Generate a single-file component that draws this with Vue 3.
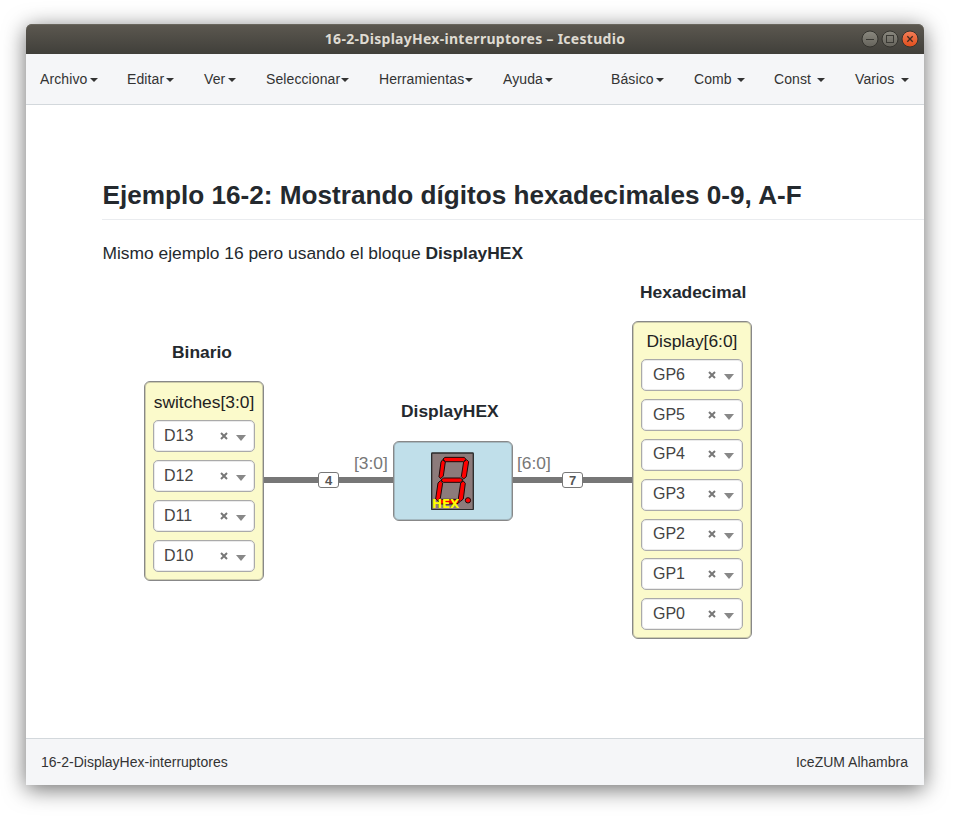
<script setup>
const menus = ['Archivo', 'Editar', 'Ver', 'Seleccionar', 'Herramientas', 'Ayuda', 'Básico', 'Comb', 'Const', 'Varios']
const widths = [58, 47, 32, 83, 94, 50, 53, 51, 51, 54]
const inputPins = ['D13', 'D12', 'D11', 'D10']
const outputPins = ['GP6', 'GP5', 'GP4', 'GP3', 'GP2', 'GP1', 'GP0']
</script>

<template>
  <div class="desktop">
    <div class="window">
      <header class="titlebar">
        <span class="title">16-2-DisplayHex-interruptores – Icestudio</span>
        <div class="controls">
          <svg class="control" viewBox="0 0 18 18">
            <defs>
              <linearGradient id="grayBtn" x1="0" y1="0" x2="0" y2="1">
                <stop offset="0" stop-color="#8a887f" /><stop offset="1" stop-color="#65635b" />
              </linearGradient>
            </defs>
            <circle cx="9" cy="9" r="8" fill="url(#grayBtn)" stroke="#34332e" />
            <path d="M5 9.5h8" stroke="#3a3934" />
          </svg>
          <svg class="control" viewBox="0 0 18 18">
            <circle cx="9" cy="9" r="8" fill="url(#grayBtn)" stroke="#34332e" />
            <rect x="5.5" y="5.5" width="7" height="7" fill="none" stroke="#3a3934" />
          </svg>
          <svg class="control" viewBox="0 0 18 18">
            <defs>
              <linearGradient id="closeBtn" x1="0" y1="0" x2="0" y2="1">
                <stop offset="0" stop-color="#f37e58" /><stop offset="1" stop-color="#e04e1c" />
              </linearGradient>
            </defs>
            <circle cx="9" cy="9" r="8" fill="url(#closeBtn)" stroke="#34332e" />
            <path d="M6.3 6.3l5.4 5.4M11.7 6.3l-5.4 5.4" stroke="#3f2a20" stroke-width="1.3" />
          </svg>
        </div>
      </header>

      <nav class="menubar">
        <div v-for="(m, i) in menus" :key="m" class="menu" :style="{ width: widths[i] + 'px' }">
          <span>{{ m }}</span><i class="caret"></i>
        </div>
      </nav>

      <main class="canvas">
        <section class="info">
          <h2>Ejemplo 16-2: Mostrando dígitos hexadecimales 0-9, A-F</h2>
          <p>Mismo ejemplo 16 pero usando el bloque <b>DisplayHEX</b></p>
        </section>

        <div class="wire wire-in"></div>
        <div class="wire wire-out"></div>
        <span class="size size-in">4</span>
        <span class="size size-out">7</span>
        <span class="port port-in">[3:0]</span>
        <span class="port port-out">[6:0]</span>

        <b class="label label-in">Binario</b>
        <div class="block block-in">
          <span class="name">switches[3:0]</span>
          <div v-for="p in inputPins" :key="p" class="select">
            <span class="pin">{{ p }}</span>
            <svg class="clear" viewBox="0 0 8 8"><path d="M1 1l6 6M7 1l-6 6" /></svg>
            <i class="arrow"></i>
          </div>
        </div>

        <b class="label label-hex">DisplayHEX</b>
        <div class="block-hex">
          <svg class="digit" viewBox="20 20 130 176">
            <rect x="22" y="23" width="125" height="170" rx="2" fill="#8c7b7b" stroke="#2b2b2b" stroke-width="4" />
            <g fill="#f00" stroke="#1c0808" stroke-width="3" stroke-linejoin="round">
              <path d="M56 41l6-5h58l5 6-7 7H63z" />
              <path d="M55 43l8 7-6 42-8 8-5-6 6-44z" />
              <path d="M127 43l6 6-7 45-8 7-7-7 7-44z" />
              <path d="M48 106l7 7-7 46-8 7-6-5 7-48z" />
              <path d="M117 107l6 7-6 47-8 7-7-7 7-48z" />
              <path d="M50 104l8-6h50l8 6-8 7H57z" />
              <path d="M42 169l9-7h46l9 8-8 6H49z" />
              <circle cx="131" cy="165" r="8" />
            </g>
            <text x="23" y="188" font-size="36" textLength="82" fill="#ff0">HEX</text>
          </svg>
        </div>

        <b class="label label-out">Hexadecimal</b>
        <div class="block block-out">
          <span class="name">Display[6:0]</span>
          <div v-for="p in outputPins" :key="p" class="select">
            <span class="pin">{{ p }}</span>
            <svg class="clear" viewBox="0 0 8 8"><path d="M1 1l6 6M7 1l-6 6" /></svg>
            <i class="arrow"></i>
          </div>
        </div>
      </main>

      <footer class="statusbar">
        <span>16-2-DisplayHex-interruptores</span>
        <span>IceZUM Alhambra</span>
      </footer>
    </div>
  </div>
</template>

<style>
body { background: #fff; overflow: hidden; }
</style>

<style scoped>
* { box-sizing: border-box; }
.desktop {
  height: 823px;
  padding: 24px 44px 38px 26px;
  font-family: "Liberation Sans", Arial, sans-serif;
  color: #24292e;
}
.window {
  height: 761px;
  display: flex;
  flex-direction: column;
  background: #fff;
  border-radius: 6px 6px 0 0;
  box-shadow: 0 4px 22px rgba(0, 0, 0, .58);
}
.titlebar {
  height: 30px;
  flex: none;
  display: grid;
  grid-template-columns: 1fr auto 1fr;
  align-items: center;
  padding-right: 5px;
  border-radius: 6px 6px 0 0;
  background: linear-gradient(#5c5850, #403f3a);
  box-shadow: inset 0 1px #69665d;
}
.title {
  grid-column: 2;
  padding-left: 5px;
  font: bold 14px/30px "Noto Sans", sans-serif;
  letter-spacing: .28px;
  color: #dfdbd2;
  white-space: nowrap;
}
.controls { display: flex; justify-content: flex-end; gap: 2px; }
.control { width: 18px; height: 18px; display: block; }
.menubar {
  height: 51px;
  flex: none;
  display: grid;
  grid-template-columns: 87px 77px 62px 113px 124px 108px 83px 80px 81px 54px;
  align-items: center;
  padding-left: 14px;
  background: #f5f6f8;
  border-bottom: 1px solid #d3d8dc;
  font-size: 14px;
  letter-spacing: .1px;
  color: #333;
}
.menu { display: flex; justify-content: space-between; align-items: center; }
.caret {
  margin-top: 2px;
  border: 4px solid transparent;
  border-top-color: #333;
  border-bottom: 0;
}
.canvas { flex: 1; position: relative; padding: 73px 0 0 76px; }
.info h2 {
  margin: 0;
  height: 42px;
  padding-left: .5px;
  font-size: 26.15px;
  line-height: 34px;
  border-bottom: 1px solid #eaecef;
  white-space: nowrap;
}
.info p { margin: 22px 0 0 .5px; font-size: 17.4px; line-height: 22px; }
.label, .port, .size, .wire, .block, .block-hex { position: absolute; }
.label { font-size: 17.4px; line-height: 20px; white-space: nowrap; }
.label-in { left: 146px; top: 237px; }
.label-hex { left: 375px; top: 296px; }
.label-out { left: 614px; top: 177px; }
.block {
  width: 120px;
  padding: 8px 8px 0;
  display: flex;
  flex-direction: column;
  gap: 8px;
  background: #fbfacb;
  border: 1px solid #888;
  border-radius: 6px;
  box-shadow: inset 0 0 0 1px rgba(100, 100, 100, .3);
}
.block-in { left: 118px; top: 276px; height: 200px; }
.block-out { left: 606px; top: 216px; height: 318px; padding-top: 7.4px; gap: 7.85px; }
.name { height: 22px; line-height: 24px; font-size: 17.4px; text-align: center; white-space: nowrap; color: #222; }
.select {
  width: 102px;
  height: 32px;
  flex: none;
  display: flex;
  align-items: center;
  padding: 0 8px 1px 10px;
  background: #fff;
  border: 1px solid #aaa;
  border-radius: 5px;
  box-shadow: inset 0 0 0 1px rgba(120, 120, 120, .15);
}
.block-out .select { padding-left: 11px; padding-right: 7px; }
.pin { width: 56px; font-size: 16px; color: #444; }
.clear { width: 8px; height: 8px; flex: none; }
.block-out .clear { margin-left: -1px; }
.clear path { stroke: #777; stroke-width: 2; fill: none; }
.arrow {
  margin: 4px 0 0 8px;
  border: 5px solid transparent;
  border-top: 6px solid #888;
  border-bottom: 0;
}
.block-hex {
  left: 367px;
  top: 336px;
  width: 120px;
  height: 80px;
  display: flex;
  align-items: center;
  justify-content: center;
  background: #c0dfea;
  border: 1px solid #888;
  border-radius: 6px;
  box-shadow: inset 0 0 0 1px rgba(100, 100, 100, .3);
}
.digit { width: 43.3px; height: 58.7px; }
.digit text { font-family: "DejaVu Sans", sans-serif; font-weight: bold; }
.wire { height: 6px; top: 372px; background: #777; }
.wire-in { left: 238px; width: 129px; }
.wire-out { left: 487px; width: 120px; }
.size {
  top: 367px;
  width: 21px;
  height: 16px;
  font-size: 13px;
  line-height: 15px;
  font-weight: bold;
  text-align: center;
  color: #555;
  background: #fff;
  border: 1px solid #777;
  border-radius: 3px;
}
.size-in { left: 292px; }
.size-out { left: 536px; }
.port { top: 348px; font-size: 17.4px; line-height: 20px; color: #777; }
.port-in { left: 328px; }
.port-out { left: 491px; }
.statusbar {
  height: 47px;
  flex: none;
  display: flex;
  align-items: center;
  justify-content: space-between;
  padding: 0 16px 0 15px;
  background: #f5f6f8;
  border-top: 1px solid #d3d8dc;
  font-size: 14px;
  color: #333;
}
</style>
